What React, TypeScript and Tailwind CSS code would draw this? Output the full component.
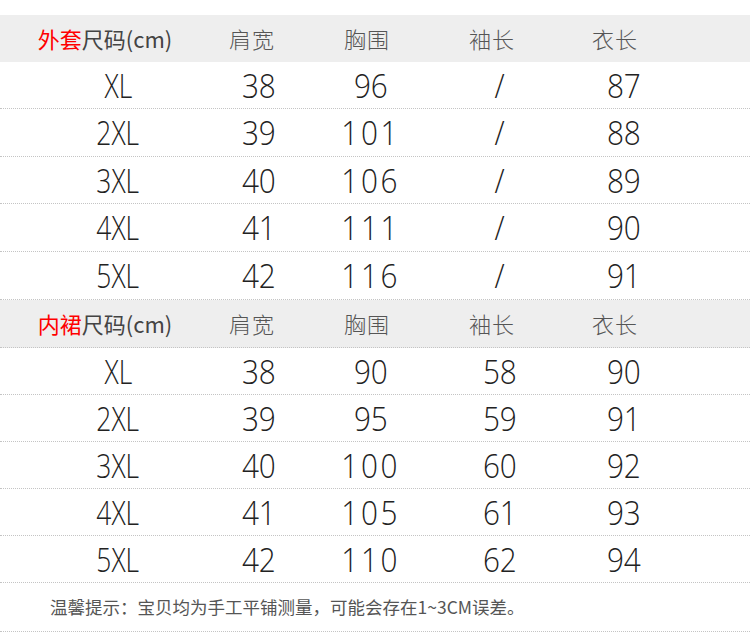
import React from "react";

const cjk = "font-['Noto_Sans_CJK_SC','Noto_Sans',sans-serif]";
const num = "font-['Open_Sans','Roboto','Liberation_Sans',sans-serif]";

type Section = {
  red: string;
  rows: string[][];
  heights: string[];
  topBorder: boolean;
};

const sections: Section[] = [
  {
    red: "外套",
    topBorder: false,
    rows: [
      ["XL", "38", "96", "/", "87"],
      ["2XL", "39", "101", "/", "88"],
      ["3XL", "40", "106", "/", "89"],
      ["4XL", "41", "111", "/", "90"],
      ["5XL", "42", "116", "/", "91"],
    ],
    heights: ["h-[47px]", "h-[48px]", "h-[47px]", "h-[48px]", "h-[48px]"],
  },
  {
    red: "内裙",
    topBorder: true,
    rows: [
      ["XL", "38", "90", "58", "90"],
      ["2XL", "39", "95", "59", "91"],
      ["3XL", "40", "100", "60", "92"],
      ["4XL", "41", "105", "61", "93"],
      ["5XL", "42", "110", "62", "94"],
    ],
    heights: ["h-[47px]", "h-[47px]", "h-[47px]", "h-[47px]", "h-[47px]"],
  },
];

function Header({ red, top }: { red: string; top: boolean }) {
  return (
    <div
      className={`grid grid-cols-[210px_84px_146px_104px_142px_1fr] items-center bg-[#eeeeee] ${
        top ? "h-[48px] border-b border-dotted border-[#c4c4c4]" : "h-[47px]"
      } ${cjk} font-light text-[22px] text-[#555555]`}
    >
      <div className="text-center text-[#444444] font-normal">
        <span className="text-[#ff0000]">{red}</span>尺码(cm)
      </div>
      <div className="text-center tracking-[1px]">肩宽</div>
      <div className="text-center tracking-[1px]">胸围</div>
      <div className="text-center tracking-[1px]">袖长</div>
      <div className="text-center tracking-[1px]">衣长</div>
      <div />
    </div>
  );
}

function Row({ cells, h }: { cells: string[]; h: string }) {
  return (
    <div
      className={`grid grid-cols-[40px_156px_126px_98px_160px_88px_1fr] items-center ${h} border-b border-dotted border-[#c4c4c4] ${num} font-light text-[33px] text-[#222222] leading-none`}
    >
      <div />
      {cells.map((c, i) => (
        <div key={i} className="text-center">
          <span
            className={`inline-block ${i === 0 ? "scale-x-[0.8]" : "scale-x-[0.9]"} ${
              c.length === 3 && i !== 0 ? "tracking-[3px]" : ""
            }`}
          >
            {c}
          </span>
        </div>
      ))}
      <div />
    </div>
  );
}

export default function App() {
  return (
    <div className="w-[750px] h-[633px] bg-white overflow-hidden pt-[15px]">
      {sections.map((s, si) => (
        <div key={si}>
          <Header red={s.red} top={s.topBorder} />
          {s.rows.map((r, ri) => (
            <Row key={ri} cells={r} h={s.heights[ri]} />
          ))}
        </div>
      ))}
      <div
        className={`h-[49px] flex items-center pl-[50px] border-b border-dotted border-[#c4c4c4] ${cjk} text-[17.5px] text-[#555555]`}
      >
        温馨提示：宝贝均为手工平铺测量，可能会存在1~3CM误差。
      </div>
    </div>
  );
}
